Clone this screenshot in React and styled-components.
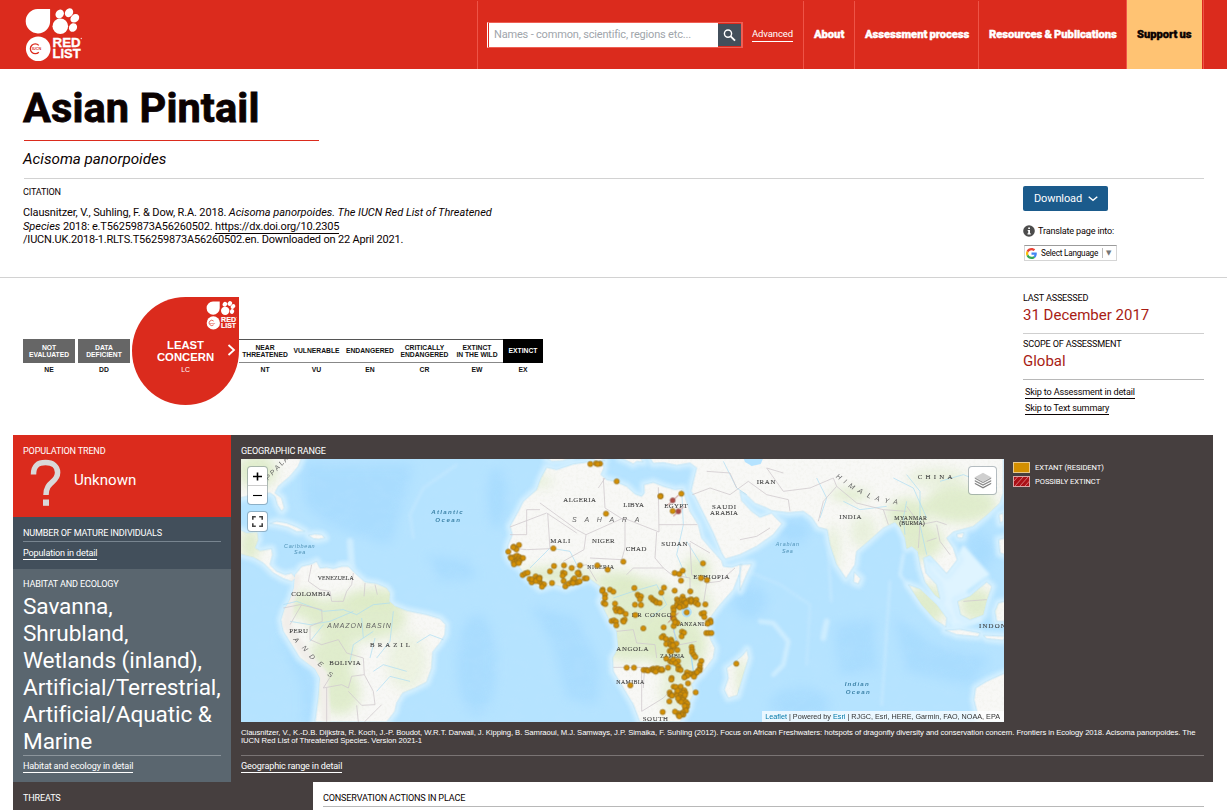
import React from "react";
import styled, { createGlobalStyle, css } from "styled-components";

const RED = "#db2b1d";
const DARK = "#463f3f";

const Global = createGlobalStyle`
  * { box-sizing: border-box; }
  html, body { margin: 0; padding: 0; background: #fff; overflow: hidden; }
  body { font-family: Roboto, "Liberation Sans", sans-serif; color: #0b0202; }
  h1, p { margin: 0; }
`;

const Page = styled.div`width: 1227px; height: 810px; overflow: hidden;`;

/* ---------- header ---------- */
const Header = styled.header`
  height: 69px; background: ${RED}; display: flex; padding: 0 24px 0 23px;
`;
const LogoBox = styled.div`flex: 1; padding-top: 8px;`;
const SearchCell = styled.div`
  width: 326px; margin-top: 1px; border-left: 1px solid #ee5447;
  display: flex; align-items: flex-start; padding: 21px 0 0 9px;
`;
const SearchBox = styled.div`
  width: 256px; height: 26px; border: 1px solid #ee5f54; border-left-color: #fff;
  border-right-width: 2px; padding-left: 1px; display: flex;
`;
const Field = styled.div`
  flex: 1; background: #fff; color: #a0a5ab; font-size: 11px; line-height: 23px; padding-left: 5px;
  white-space: nowrap; letter-spacing: -0.18px;
`;
const SearchButton = styled.div`
  width: 23px; height: 22px; margin-top: 1px; background: #424f5b; display: flex; align-items: center; justify-content: center;
`;
const Advanced = styled.span`
  margin: 6px 0 0 9px; color: #fff; font-size: 9.5px; line-height: 12px; height: 14px;
  border-bottom: 1px solid #fff; letter-spacing: -0.1px;
`;
const NavItem = styled.div`
  margin-top: 1px; width: ${(p) => p.$w}px; border-left: 1px solid #ee5447; color: #fff;
  font-size: 11.2px; font-weight: 900; line-height: 67px; padding-left: 10px; white-space: nowrap;
  letter-spacing: -0.03px; word-spacing: -0.6px; -webkit-text-stroke: 0.4px currentColor;
  ${(p) => p.$accent && css`
    margin-top: 0; padding-top: 1px; background: #ffc373; color: #0b0202;
    border-right: 1px solid ${RED};
    box-shadow: 1px 0 0 #ee5447;
  `}
`;

/* ---------- title ---------- */
const TitleSection = styled.section`
  height: 209px; padding: 0 23px 0 24px; border-bottom: 1px solid #d2d2d2;
`;
const Title = styled.h1`
  width: 295px; height: 72px; font-size: 41.5px; font-weight: 700; line-height: 77px; text-indent: -1px;
  border-bottom: 1px solid ${RED}; letter-spacing: 0.1px; white-space: nowrap; -webkit-text-stroke: 0.8px currentColor;
`;
const Latin = styled.p`
  height: 38px; font-size: 15.2px; font-style: italic; line-height: 37px; text-indent: -1px;
  border-bottom: 1px solid #d2d2d2;
`;
const Columns = styled.div`display: flex; justify-content: space-between;`;
const CitationCol = styled.div`padding-top: 7px;`;
const Side = styled.div`width: 181px;`;
const Label = styled.div`
  font-size: 9.1px; line-height: 12px; letter-spacing: -0.18px; white-space: nowrap; color: ${(p) => p.$c || "#0b0202"};
  margin-left: ${(p) => p.$ml || 0}px;
`;
const Citation = styled.p`
  margin: 8px 0 0 -1px; font-size: 11px; line-height: 13.5px; white-space: nowrap; letter-spacing: -0.18px;
`;
const CiteLink = styled.a`border-bottom: 1px solid #0b0202;`;
const CiteAuthors = styled.span`letter-spacing: -0.145px;`;
const CiteItalic = styled.i`letter-spacing: ${(p) => p.$ls || 0}px;`;
const Download = styled.div`
  width: 85px; height: 25px; margin-top: 7px; border-radius: 2px; background: #1b5b8c; color: #fff;
  font-size: 11px; display: flex; align-items: center; padding-left: 11px; gap: 6px; letter-spacing: -0.12px;
`;
const Translate = styled.div`
  display: flex; align-items: center; gap: 3px; margin-top: 13px; font-size: 9.1px; height: 13px; letter-spacing: -0.18px;
`;
const LangSelect = styled.div`
  margin: 8px 0 0 1px; width: 93px; height: 16px; border: 1px solid #d5d5d5; border-top-color: #9b9b9b;
  display: flex; align-items: center; padding-left: 1px; font-size: 8.2px; white-space: nowrap;
`;
const LangText = styled.span`margin-left: 4px; width: 61px; letter-spacing: -0.22px;`;
const Arrow = styled.span`
  border-left: 1px solid #bbb; height: 10px; line-height: 10px; padding-left: 3px; color: #767676; font-size: 7px;
  font-family: "DejaVu Sans", sans-serif;
`;

/* ---------- status ---------- */
const StatusSection = styled.section`
  height: 157px; padding: 0 23px; display: flex; justify-content: space-between;
`;
const Scale = styled.div`
  display: flex; align-items: flex-start; padding-top: 19px; font-family: "Liberation Sans", Arial, sans-serif;
`;
const Stage = styled.div`width: ${(p) => p.$w}px; margin: 42px ${(p) => p.$gap || 0}px 0 0; color: #111;`;
const StageBox = styled.div`
  height: 24px; display: flex; align-items: center; justify-content: center; text-align: center;
  font-size: 6.75px; font-weight: 700; line-height: 7.3px; white-space: pre;
  border-top: 1px solid #555; border-bottom: 1px solid #888;
  ${(p) => p.$tone && css`background: ${p.$tone}; color: #fff; border-color: ${p.$tone};`}
`;
const StageCode = styled.div`text-align: center; font-size: 6.8px; font-weight: 700; line-height: 8px; margin-top: 3px;`;
const Drop = styled.div`
  width: 107px; height: 108px; background: ${RED}; border-radius: 50% 0 50% 50%; color: #fff;
  position: relative; display: flex; flex-direction: column; align-items: center; padding-top: 42px;
`;
const DropName = styled.div`font-size: 11.3px; font-weight: 700; line-height: 12px; text-align: center; white-space: pre;`;
const DropCode = styled.div`font-size: 6.8px; line-height: 8px; margin-top: 3px;`;
const DropLogo = styled.div`position: absolute; right: 2px; top: 4px; line-height: 0;`;
const DropChevron = styled.div`position: absolute; right: 3px; top: 47px; line-height: 0;`;
const Facts = styled.div`width: 181px; padding-top: 14px;`;
const Fact = styled.div`height: ${(p) => p.$h}px; border-bottom: 1px solid ${(p) => p.$line || "#cfcfcf"};
  padding-top: ${(p) => p.$pt || 0}px;`;
const FactValue = styled.div`font-size: 15px; line-height: 20px; margin-top: 1px; color: #a81c14; white-space: nowrap;`;
const InlineLink = styled.a`
  display: table; font-size: 9.1px; line-height: 11px; height: 12px; white-space: nowrap;
  border-bottom: 1px solid currentColor; color: ${(p) => p.$c || "#0b0202"};
  margin: ${(p) => p.$m || "0"}; letter-spacing: -0.16px;
`;

/* ---------- panels ---------- */
const Panels = styled.section`height: 347px; margin: 0 14px 0 13px; display: flex; background: ${DARK};`;
const LeftCol = styled.div`width: 218px; flex: none; color: #fff;`;
const Panel = styled.div`height: ${(p) => p.$h}px; background: ${(p) => p.$bg}; padding: ${(p) => p.$pt}px 10px 0;`;
const Trend = styled.div`display: flex; align-items: flex-start; padding-left: 7px;`;
const TrendValue = styled.div`font-size: 15.1px; line-height: 20px; margin: 13px 0 0 13px;`;
const Rule = styled.div`height: 1px; background: ${(p) => p.$c}; margin-top: ${(p) => p.$mt || 0}px;`;
const Habitats = styled.div`font-size: 22.6px; line-height: 27px; white-space: pre; margin-top: 3px; letter-spacing: -0.08px;`;
const MapCol = styled.div`flex: 1; min-width: 0; padding: 10px 9px 0 10px; color: #fff;`;
const MapRow = styled.div`display: flex; margin-top: 2px;`;
const MapFrame = styled.div`position: relative; flex: none; width: 763px; height: 263px; overflow: hidden; background: #b4e3ff;`;
const Legend = styled.div`padding: 2px 0 0 9px; display: flex; flex-direction: column; gap: 2px;`;
const LegendItem = styled.div`
  display: flex; align-items: center; gap: 5px; height: 12px; font-size: 7.6px; letter-spacing: -0.05px; white-space: nowrap;
`;
const Control = styled.div`
  position: absolute; left: ${(p) => p.$x}px; top: ${(p) => p.$y}px; width: ${(p) => p.$w}px; height: ${(p) => p.$h}px;
  background: #fff; border-radius: 3px; box-shadow: 0 0 0 1px rgba(80,100,115,.4); color: #000;
  display: flex; flex-direction: column; align-items: center; justify-content: center;
`;
const Zoom = styled.span`
  height: 19px; width: 100%; display: flex; align-items: center; justify-content: center;
  & + & { border-top: 1px solid #ccc; }
`;
const Attribution = styled.div`
  position: absolute; right: 0; bottom: 0; height: 11px; padding: 0 4px 0 3px; background: rgba(255,255,255,.72);
  color: #333; font: 7.23px/11px "Liberation Sans", Arial, sans-serif; white-space: nowrap;
  a { color: #0078a8; }
`;
const MapNote = styled.p`
  margin-top: 7px; font: 7.7px/8px "Liberation Sans", Arial, sans-serif; white-space: nowrap; height: 16px;
  letter-spacing: -0.067px;
`;
const Bottom = styled.section`display: flex; margin: 0 14px 0 13px; height: 28px;`;
const Threats = styled.div`width: 300px; background: ${DARK}; padding: 10px 10px 0;`;
const Actions = styled.div`flex: 1; padding: 10px 9px 0 10px;`;

/* ---------- drawings ---------- */
const RedListLogo = ({ w, h }) => (
  <svg width={w} height={h} viewBox="0 0 59 54">
    <g fill="#fff">
      <path d="M14.5 1H27.1V13.5A12.2 12.2 0 1 1 14.5 1Z" />
      <circle cx="37.3" cy="18.3" r="7.8" />
      <ellipse cx="36.7" cy="6" rx="4" ry="4.7" transform="rotate(35 36.7 6)" />
      <ellipse cx="46" cy="4.7" rx="3.9" ry="4.7" transform="rotate(35 46 4.7)" />
      <ellipse cx="51.8" cy="10.3" rx="3.8" ry="4.8" transform="rotate(50 51.8 10.3)" />
      <ellipse cx="50" cy="19.5" rx="3.9" ry="4.5" transform="rotate(35 50 19.5)" />
      <circle cx="15.2" cy="40.8" r="12.3" />
      <g fontFamily="'Liberation Sans', Arial, sans-serif" fontWeight="700" fontSize="13.2" stroke="#fff" strokeWidth=".35">
        <text x="29.6" y="39.4" textLength="28" lengthAdjust="spacingAndGlyphs">RED</text>
        <text x="29.6" y="50.4" textLength="28" lengthAdjust="spacingAndGlyphs">LIST</text>
      </g>
      <circle cx="58.3" cy="30.5" r=".7" opacity=".8" />
    </g>
    <path d="M15.8 37.4A4.9 4.9 0 1 0 15.8 44.2" fill="none" stroke={RED} strokeWidth="1.3" />
    <text x="9" y="42.3" fontSize="4" fontWeight="700" fill={RED} fontFamily="'Liberation Sans', Arial, sans-serif" textLength="9.3" lengthAdjust="spacingAndGlyphs">IUCN</text>
  </svg>
);

const SearchIcon = () => (
  <svg width="13" height="13" viewBox="0 0 13 13" fill="none" stroke="#fff">
    <circle cx="5" cy="4.6" r="3.6" strokeWidth="1.4" />
    <path d="M7.7 7.4L12 11.6" strokeWidth="1.9" />
  </svg>
);

const GoogleG = () => (
  <svg width="11" height="11" viewBox="0 0 48 48">
    <path fill="#EA4335" d="M24 9.5c3.54 0 6.71 1.22 9.21 3.6l6.85-6.85C35.9 2.38 30.47 0 24 0 14.62 0 6.51 5.38 2.56 13.22l7.98 6.19C12.43 13.72 17.74 9.5 24 9.5z" />
    <path fill="#4285F4" d="M46.98 24.55c0-1.57-.15-3.09-.38-4.55H24v9.02h12.94c-.58 2.96-2.26 5.48-4.78 7.18l7.73 6c4.51-4.18 7.09-10.36 7.09-17.65z" />
    <path fill="#FBBC05" d="M10.53 28.59c-.48-1.45-.76-2.99-.76-4.59s.27-3.14.76-4.59l-7.98-6.19C.92 16.46 0 20.12 0 24c0 3.88.92 7.54 2.56 10.78l7.97-6.19z" />
    <path fill="#34A853" d="M24 48c6.48 0 11.93-2.13 15.89-5.81l-7.73-6c-2.15 1.45-4.92 2.3-8.16 2.3-6.26 0-11.57-4.22-13.47-9.91l-7.98 6.19C6.51 42.62 14.62 48 24 48z" />
  </svg>
);

const LAND = [
  "M-750 0H-565L-575 25L-600 55L-635 85L-645 105L-625 120L-617 150L-625 160L-638 140L-645 115L-660 105L-690 110L-730 115L-750 120Z",
  "M-750 215L-730 225L-698 222L-695 245L-705 270L-690 278L-655 272L-652 290L-660 320L-640 340L-615 350L-595 345L-585 360L-595 370L-620 362L-650 345L-680 315L-710 298L-750 288Z",
  "M-662 197L-640 190L-610 195L-580 207L-555 220L-580 221L-605 208L-640 200Z",
  "M-545 232L-525 228L-505 230L-495 240L-515 244L-530 242Z",
  "M-585 350L-565 325L-535 318L-520 310L-510 330L-490 328L-470 332L-445 325L-425 325L-405 345L-375 372L-340 377L-310 390L-300 405L-302 430L-285 445L-250 458L-190 470L-150 482L-133 500L-135 530L-150 555L-172 582L-175 630L-190 672L-225 690L-262 705L-280 735L-285 760L-310 792H-525L-515 720L-510 660L-525 632L-570 600L-595 560L-620 520L-627 485L-617 455L-600 425L-588 390Z",
  "M170 28L200 35L250 18L310 10L337 12L342 30L333 50L350 65L375 70L410 85L435 108L455 115L463 105L462 80L490 73L520 85L555 95L578 92L590 130L600 160L625 200L635 240L665 275L695 308L700 325L725 328L755 318L750 345L730 395L690 440L660 480L655 510L662 545L675 570L670 600L640 640L620 660L605 680L612 705L600 730L597 750L582 775L570 792H450L430 740L400 690L370 640L368 600L385 570L380 520L360 490L345 460L330 430L340 405L330 385L300 363L270 372L230 390L190 380L150 392L110 360L90 330L60 310L50 290L55 260L67 230L60 205L85 160L100 130L140 95L153 60Z",
  "M771 575L776 600L760 650L742 712L715 720L703 695L715 660L710 630L735 612L758 592Z",
  "M170 0H245L215 9L185 10ZM300 0H330L345 8L320 9ZM390 0H450L460 12L440 10L430 18L410 8ZM480 0H1540V105L1530 135L1490 172L1450 205L1390 222L1370 240L1390 270L1402 305L1370 347L1350 325L1320 292L1300 300L1308 345L1340 380L1350 422L1335 412L1305 372L1292 330L1283 280L1265 265L1250 272L1245 240L1230 210L1215 193L1180 210L1135 250L1100 280L1095 320L1068 362L1040 320L1020 260L1012 215L985 208L965 178L940 160L895 164L845 158L830 150L795 136L770 112L750 100L755 128L785 160L810 178L845 165L858 180L876 197L850 230L800 265L750 290L706 303L695 285L670 225L640 165L615 115L603 100L610 70L620 30L600 15L560 22L520 14L490 16Z",
  "M750 320L785 318L770 350L750 398Z",
  "M1093 342L1112 362L1105 378L1090 372Z",
  "M1255 380L1290 393L1340 440L1370 480L1368 507L1335 485L1295 440Z",
  "M1365 517L1410 514L1470 525L1465 536L1400 530ZM1480 532L1545 535L1540 547L1490 542Z",
  "M1403 430L1440 415L1490 372L1506 385L1490 430L1480 470L1440 485L1412 470Z",
  "M1515 460L1525 435L1545 430V490H1520ZM1527 170L1540 165V190L1530 195ZM1526 245L1545 240V290L1530 285Z",
  "M1400 228L1422 224L1418 240L1403 240Z",
  "M1545 645L1490 670L1457 690L1452 725L1462 765L1470 792H1545Z",
].join("");

const BORDERS = [
  "M170 165L60 207M150 135L260 215L288 230L400 180L507 222L505 88M340 60L345 150L400 185M173 165L180 272L110 275M173 167L260 225M288 230L282 275L220 310M405 185L405 270L395 305L300 300M507 200H622M500 222L495 300L520 330M410 350L430 330L520 330L545 350L600 360M600 250L660 285M600 255L605 350L650 375L690 370L735 330M650 375L640 440",
  "M370 628H450L500 630L560 615M455 630V760L520 720L550 690M463 640L460 690M380 520L430 515L440 555L495 560L500 600M560 480L550 520L570 560L620 550M600 420V360M220 330V380M270 320V370M60 230H110V155H150M110 275L60 270M240 330L290 320L320 370M345 60L325 90",
  "M-535 320L-545 370L-510 395L-480 400L-475 430L-440 430L-430 400L-415 380L-410 345M-375 375L-378 415M-345 380L-338 410M-620 450L-570 440L-505 455L-503 490L-540 505L-540 545L-505 560L-455 545L-430 585L-380 600L-377 650L-415 655L-425 690L-445 680L-500 690L-475 650M-377 650L-350 700L-345 740L-385 742L-425 700M-490 690V792M-377 792L-325 740M-400 742L-395 792M-600 500L-565 440",
  "M607 110L660 90L720 110L775 70L830 110M650 40L720 45L740 90M750 245L800 235L840 210M830 110L895 125L900 160M880 45L830 30L880 100L960 90L1030 60L1040 85L1000 130L985 190M1040 85L1100 135L1180 155L1250 160M1180 155L1195 200M1250 145L1290 200L1340 190L1370 200M1290 200L1285 270M1340 200L1350 250L1380 290M1310 250L1340 240M1420 430L1490 425",
];

const RIVERS = [
  "M-620 440L-580 430L-500 460L-440 455L-400 470L-350 440L-300 435M-600 490L-540 500L-480 490L-410 460M-540 550L-500 500M-380 540L-385 480M-290 460L-300 550L-340 600M-220 555L-180 530L-140 545M-350 640L-320 620L-250 640M-340 700L-300 655L-240 670M-420 610L-410 560L-350 520M-360 600L-345 540",
  "M575 95L580 200L560 290L590 360M120 330L180 270L240 280L270 340M370 420L430 400L500 380L530 440L480 480M560 620L500 640M590 250L640 330",
  "M990 180L1010 120L980 60M1060 130L1110 155L1190 145M1210 60L1270 90L1310 180M1250 50L1290 100L1290 200L1310 290M1350 70L1420 50L1520 90M1250 130L1240 180L1245 230M700 10L740 90L770 110",
];

const GREENS = [
  [-400, 480, 150, 70], [-470, 590, 70, 60], [-340, 420, 90, 30], [-450, 700, 60, 70], [-250, 610, 60, 90, 0.4],
  [-560, 440, 50, 40], [-700, 40, 60, 50], [-720, 260, 30, 50],
  [450, 440, 110, 80], [430, 560, 100, 50], [560, 560, 90, 90], [200, 350, 110, 25], [620, 340, 40, 45],
  [610, 440, 60, 50, 0.6], [380, 370, 70, 30], [560, 700, 50, 70, 0.6], [755, 660, 14, 60],
  [1250, 170, 60, 50], [1410, 140, 110, 55], [1290, 250, 70, 55], [1460, 440, 50, 50], [1310, 440, 60, 60],
  [1120, 220, 40, 50, 0.5], [1030, 270, 18, 70, 0.6], [1080, 110, 60, 18], [1340, 60, 90, 30, 0.5], [150, 70, 40, 20, 0.5],
];

const DOTS = `301,18 318,16 330,17 323,18 380,70 348,167 512,114 511,115 574,107 548,159 87,261 71,266 79,274 70,268 55,281 62,298 69,300 75,296 81,293 88,297 94,301 99,300 84,305 77,310 71,313 80,314 88,310 72,319 64,301 86,315 190,271 98,351 106,346 113,344 119,363 125,373 126,364 137,355 143,362 149,359 149,371 156,378 162,379 156,386 138,369 148,362 186,375 180,340 192,324 222,322 245,330 270,322 219,344 224,346 218,353 221,369 226,385 236,377 245,373 249,366 254,371 259,373 264,372 269,370 265,344 267,350 263,345 253,361 284,361 290,361 249,375 322,322 353,335 400,311 338,395 337,399 345,410 345,420 341,435 346,438 360,395 370,401 375,437 376,452 379,459 386,453 391,456 396,460 407,468 390,461 365,489 372,487 378,491 379,502 399,488 404,485 401,491 433,390 443,410 446,414 453,415 450,424 435,440 453,441 436,471 460,511 483,419 488,425 493,428 498,431 500,434 509,435 514,404 522,389 521,508 554,398 601,400 573,368 554,345 568,348 578,338 639,316 633,360 651,366 561,424 564,430 562,437 560,443 568,446 572,435 578,416 576,424 583,426 582,437 586,442 592,430 598,426 604,424 603,432 605,428 615,428 619,425 618,435 624,439 574,441 579,445 569,448 588,435 550,449 551,457 550,468 552,483 646,439 590,463 635,467 642,465 643,477 661,487 654,493 662,493 653,497 649,525 656,525 664,525 557,491 562,495 551,504 555,493 576,521 582,524 575,535 520,534 515,538 528,543 529,558 543,545 545,551 541,559 544,563 552,567 559,557 549,562 539,579 544,580 562,576 529,602 541,610 546,612 550,605 564,609 557,616 534,629 565,625 569,633 565,634 572,636 605,567 606,575 606,582 611,590 616,597 634,609 630,621 630,631 629,637 625,637 617,645 613,650 621,643 608,648 603,648 598,646 591,643 589,651 585,656 592,653 612,656 583,658 545,660 544,665 594,676 617,703 410,629 432,629 461,636 469,636 474,638 485,634 490,632 491,637 494,635 499,637 500,631 505,632 511,636 517,636 497,641 515,634 421,682 551,686 559,689 572,686 557,687 539,703 540,709 545,712 546,713 560,706 562,713 563,698 578,700 583,697 586,704 580,705 573,711 571,718 577,721 568,728 581,719 585,711 578,727 574,732 588,732 590,740 592,737 591,746 586,752 584,744 588,758 579,763 580,770 575,767 573,770 565,766 566,772 568,775 555,761 538,730 518,762 564,721 739,617`
  .split(" ").map((p) => p.split(",").map(Number));
const EXTINCT = [[548, 127], [565, 160], [549, 479]];

const COUNTRIES = [
  [220, 133, 98, "ALGERIA"], [400, 146, 62, "LIBYA"], [523, 151, 70, "EGYPT"], [666, 153, 72, "SAUDI"], [660, 172, 84, "ARABIA"],
  [181, 256, 60, "MALI"], [306, 256, 68, "NIGER"], [407, 279, 62, "CHAD"], [514, 264, 78, "SUDAN"], [292, 334, 80, "NIGERIA"],
  [610, 364, 108, "ETHIOPIA"], [425, 476, 120, "DR CONGO"], [558, 504, 98, "TANZANIA"], [379, 579, 96, "ANGOLA"],
  [511, 599, 72, "ZAMBIA"], [379, 679, 84, "NAMIBIA"], [458, 790, 76, "SOUTH"],
  [-517, 365, 108, "VENEZUELA"], [-596, 414, 118, "COLOMBIA"], [-602, 524, 56, "PERU"], [-360, 568, 120, "BRAZIL"], [-482, 620, 94, "BOLIVIA"],
  [800, 77, 56, "IRAN"], [1048, 182, 66, "INDIA"], [1283, 63, 104, "CHINA"], [1213, 185, 98, "MYANMAR"], [1228, 201, 76, "(BURMA)"], [1467, 510, 80, "INDON"],
];
const SEAS = [
  [-176, 167, 94, "Atlantic", 18.5, 700], [-164, 193, 74, "Ocean", 18.5, 700], [1064, 683, 72, "Indian", 18.5, 700], [1067, 708, 72, "Ocean", 18.5, 700],
  [-618, 270, 92, "Caribbean", 16.5, 400], [-588, 288, 34, "Sea", 16.5, 400], [857, 263, 70, "Arabian", 16, 400], [876, 284, 32, "Sea", 16, 400],
];
const RANGES = [
  [-592, 547, "A", 50], [-566, 572, "N", 50], [-544, 597, "D", 48], [-519, 619, "E", 38], [-490, 650, "S", 30],
  [1036, 57, "H", 35], [1055, 71, "I", 35], [1075, 86, "M", 33], [1101, 100, "A", 30], [1127, 114, "L", 25], [1152, 123, "A", 20], [1180, 129, "Y", 12], [1207, 132, "A", 8],
  [-675, 58, "P", -42], [-662, 44, "P", -44], [-648, 30, "A", -48], [-635, 16, "L", -52], [-624, 4, "A", -56],
];

const RangeMap = () => (
  <svg width="763" height="263" viewBox="241 459 763 263" style={{ display: "block" }}>
    <defs>
      <filter id="soft" x="-50%" y="-50%" width="200%" height="200%"><feGaussianBlur stdDeviation="16" /></filter>
      <filter id="shore"><feGaussianBlur stdDeviation="5" /></filter>
      <filter id="relief" x="0" y="0" width="100%" height="100%">
        <feTurbulence type="fractalNoise" baseFrequency=".02 .03" numOctaves="4" seed="4" />
        <feColorMatrix values="0 0 0 0 .52 0 0 0 0 .78 0 0 0 0 1 1.6 0 0 0 -.62" />
      </filter>
      <filter id="ground" x="0" y="0" width="100%" height="100%">
        <feTurbulence type="fractalNoise" baseFrequency=".12" numOctaves="3" seed="8" />
        <feColorMatrix values="0 0 0 0 .72 0 0 0 0 .74 0 0 0 0 .62 1.4 0 0 0 -.62" />
      </filter>
      <clipPath id="land"><path d={LAND} /></clipPath>
    </defs>
    <g transform="translate(490 458) scale(.33333)">
      <rect x="-750" y="0" width="2295" height="795" fill="#b5e3ff" />
      <g fill="#a5dafe" filter="url(#soft)" opacity=".75">
        <path d="M-560 20H-230L-260 130L-300 260L-400 230L-500 190L-560 130Z" />
        <path d="M-190 290L-60 310L-40 360L-150 370Z" />
        <ellipse cx="-40" cy="620" rx="60" ry="150" />
        <path d="M120 440L260 480L330 620L320 740L230 720L190 560Z" />
        <ellipse cx="20" cy="120" rx="30" ry="90" />
        <ellipse cx="780" cy="430" rx="50" ry="50" />
        <path d="M1030 500L1150 480L1160 640L1050 650Z" />
        <path d="M1210 470L1330 560L1500 600L1440 680L1250 640Z" />
        <ellipse cx="930" cy="740" rx="90" ry="50" />
        <ellipse cx="1470" cy="280" rx="40" ry="60" />
        <ellipse cx="910" cy="220" rx="50" ry="35" />
        <path d="M-640 530L-560 620L-530 680L-530 792L-560 792L-560 680Z" />
      </g>
      <rect x="-750" y="0" width="2295" height="795" filter="url(#relief)" opacity=".2" />
      <g fill="none" stroke="#dff4ff" strokeLinecap="round" filter="url(#shore)" opacity=".6">
        <path d="M-230 240L-240 170L-200 90L-100 20" strokeWidth="8" opacity=".5" />
        <path d="M1015 280L1024 430M1200 370L1185 600L1175 740" strokeWidth="8" opacity=".6" />
        <path d="M810 490L850 495L895 550L880 620L850 650" strokeWidth="14" />
        <path d="M1010 490L1000 540" strokeWidth="18" />
        <path d="M750 330L870 380L960 440L950 620" strokeWidth="7" opacity=".5" />
        <path d="M-420 250L-415 320L-450 320" strokeWidth="20" />
        <path d="M1240 290L1230 350L1280 420L1400 530" strokeWidth="10" />
      </g>
      <path d="M1290 300L1330 420L1390 520L1480 490L1430 400L1500 350L1420 260L1380 330Z" fill="#dff4ff" filter="url(#shore)" />
      <path d={LAND} fill="none" stroke="#cdedff" strokeWidth="34" strokeLinejoin="round" filter="url(#shore)" opacity=".5" />
      <path d={LAND} fill="none" stroke="#dcf3ff" strokeWidth="16" strokeLinejoin="round" filter="url(#shore)" opacity=".75" />
      <path d={LAND} fill="#f8f8f6" stroke="#b3def4" strokeWidth="2" />
      <g clipPath="url(#land)">
        <g fill="#dcebc6" filter="url(#soft)">
          {GREENS.map(([x, y, rx, ry, o], i) => <ellipse key={i} cx={x} cy={y} rx={rx} ry={ry} opacity={o || 0.85} />)}
        </g>
        <rect x="-750" y="0" width="2295" height="795" filter="url(#ground)" opacity=".25" />
        <path d="M-580 350L-600 430L-610 500L-560 580L-500 650L-490 790" fill="none" stroke="#f1eeea" strokeWidth="26" filter="url(#shore)" />
      </g>
      <g fill="none" stroke="#a9dcf5" strokeWidth="2" strokeLinejoin="round">
        {RIVERS.map((d, i) => <path key={i} d={d} />)}
        <ellipse cx="590" cy="462" rx="14" ry="15" fill="#b5e3ff" />
        <path d="M548 500L560 555M603 590L610 640" strokeWidth="4" />
        <path d="M760 0H820L812 18L785 24L765 12Z" fill="#b5e3ff" stroke="none" />
      </g>
      <g fill="none" stroke="#d0cace" strokeWidth="2.4" strokeLinejoin="round">
        {BORDERS.map((d, i) => <path key={i} d={d} />)}
      </g>
      <g fontFamily="'Liberation Serif', serif" fill="#3f3f3f" stroke="#3f3f3f" strokeWidth=".3">
        {COUNTRIES.map(([x, y, w, t]) => <text key={t} x={x} y={y} textLength={w} fontSize={/MYAN|BURMA|NIGERIA|ZAMB|TANZ|NAMI|VENEZ/.test(t) ? 17.5 : 20.5}>{t}</text>)}
      </g>
      <g fontFamily="'Liberation Sans', sans-serif" fontStyle="italic" fill="#3d83a8">
        {SEAS.map(([x, y, w, t, s, fw], i) => <text key={i} x={x} y={y} textLength={w} fontSize={s} fontWeight={fw} opacity={fw === 400 ? 0.85 : 1}>{t}</text>)}
      </g>
      <g fontFamily="'Liberation Sans', sans-serif" fontStyle="italic" fill="#666" fontSize="21">
        <text x="-488" y="510" textLength="190">AMAZON BASIN</text>
        <text x="246" y="191" textLength="202">SAHARA</text>
        {RANGES.map(([x, y, t, r], i) => (
          <text key={i} x={x + 10} y={y + 6} textAnchor="middle" transform={`rotate(${r} ${x + 10} ${y})`}>{t}</text>
        ))}
      </g>
      <g stroke="#a8403c" strokeWidth="2">
        {EXTINCT.map(([x, y], i) => (
          <g key={i}><path d={`M${x - 15} ${y + 15}L${x + 17} ${y - 15}`} /><circle cx={x} cy={y} r="7.5" fill="#ae4a44" stroke="#8d5050" /></g>
        ))}
      </g>
      <g fill="#d38f05" stroke="#86671e" strokeWidth="1.8">
        {DOTS.map(([x, y], i) => <circle key={i} cx={x} cy={y} r="7.8" />)}
      </g>
    </g>
  </svg>
);

const STAGES = [
  [52, "NEAR\nTHREATENED", "NT"], [51, "VULNERABLE", "VU"], [56, "ENDANGERED", "EN"],
  [53, "CRITICALLY\nENDANGERED", "CR"], [52, "EXTINCT\nIN THE WILD", "EW"], [40, "EXTINCT", "EX", "#000"],
];

export default function App() {
  return (
    <Page>
      <Global />
      <Header>
        <LogoBox><RedListLogo w={59} h={54} /></LogoBox>
        <SearchCell>
          <SearchBox>
            <Field>Names - common, scientific, regions etc...</Field>
            <SearchButton><SearchIcon /></SearchButton>
          </SearchBox>
          <Advanced>Advanced</Advanced>
        </SearchCell>
        <NavItem $w={51}>About</NavItem>
        <NavItem $w={124}>Assessment process</NavItem>
        <NavItem $w={148}>Resources &amp; Publications</NavItem>
        <NavItem $w={77} $accent>Support us</NavItem>
      </Header>

      <TitleSection>
        <Title>Asian Pintail</Title>
        <Latin>Acisoma panorpoides</Latin>
        <Columns>
          <CitationCol>
            <Label $ml={-1}>CITATION</Label>
            <Citation>
              <CiteAuthors>Clausnitzer, V., Suhling, F. &amp; Dow, R.A. 2018. </CiteAuthors>
              <CiteItalic $ls={-0.02}>Acisoma panorpoides. The IUCN Red List of Threatened</CiteItalic><br />
              <CiteItalic>Species</CiteItalic> 2018: e.T56259873A56260502. <CiteLink>https://dx.doi.org/10.2305</CiteLink><br />
              /IUCN.UK.2018-1.RLTS.T56259873A56260502.en. Downloaded on 22 April 2021.
            </Citation>
          </CitationCol>
          <Side>
            <Download>
              Download
              <svg width="10" height="6" viewBox="0 0 10 6" fill="none" stroke="#fff" strokeWidth="1.4"><path d="M.7 .8L5 4.4L9.3 .8" /></svg>
            </Download>
            <Translate>
              <svg width="12" height="12" viewBox="0 0 12 12"><circle cx="6" cy="6" r="5.8" fill="#4c4c4c" /><path d="M5.2 2.4H7V4H5.2ZM4.7 5H7V8.3H7.7V9.4H4.5V8.3H5.2V6H4.7Z" fill="#fff" /></svg>
              Translate page into:
            </Translate>
            <LangSelect><GoogleG /><LangText>Select Language</LangText><Arrow>▼</Arrow></LangSelect>
          </Side>
        </Columns>
      </TitleSection>

      <StatusSection>
        <Scale>
          <Stage $w={52} $gap={3}><StageBox $tone="#666">{"NOT\nEVALUATED"}</StageBox><StageCode>NE</StageCode></Stage>
          <Stage $w={52} $gap={2}><StageBox $tone="#666">{"DATA\nDEFICIENT"}</StageBox><StageCode>DD</StageCode></Stage>
          <Drop>
            <DropLogo><RedListLogo w={32} h={29} /></DropLogo>
            <DropName>{"LEAST\nCONCERN"}</DropName>
            <DropCode>LC</DropCode>
            <DropChevron><svg width="9" height="12" viewBox="0 0 9 12" fill="none" stroke="#fff" strokeWidth="1.8"><path d="M1.5 1L7 6L1.5 11" /></svg></DropChevron>
          </Drop>
          {STAGES.map(([w, name, code, tone]) => (
            <Stage key={code} $w={w}><StageBox $tone={tone}>{name}</StageBox><StageCode>{code}</StageCode></Stage>
          ))}
        </Scale>
        <Facts>
          <Fact $h={42}><Label>LAST ASSESSED</Label><FactValue>31 December 2017</FactValue></Fact>
          <Fact $h={46} $line="#b8b8b8" $pt={4}><Label>SCOPE OF ASSESSMENT</Label><FactValue>Global</FactValue></Fact>
          <InlineLink $m="7px 0 4px 2px">Skip to Assessment in detail</InlineLink>
          <InlineLink $m="0 0 0 2px">Skip to Text summary</InlineLink>
        </Facts>
      </StatusSection>

      <Panels>
        <LeftCol>
          <Panel $h={82} $bg={RED} $pt={10}>
            <Label $c="#fff">POPULATION TREND</Label>
            <Trend>
              <svg width="31" height="50" viewBox="0 0 31 50" fill="none" stroke="#d9d9d9" strokeWidth="5.5">
                <path d="M3.5 17.5C3.5 8.5 8 5.6 15.5 5.6C23 5.6 27.6 9.5 27.6 15.5C27.6 26 16 24 16 38" />
                <path d="M16 42.5V48.8" strokeWidth="6" />
              </svg>
              <TrendValue>Unknown</TrendValue>
            </Trend>
          </Panel>
          <Panel $h={52} $bg="#424f5b" $pt={10}>
            <Label $c="#fff">NUMBER OF MATURE INDIVIDUALS</Label>
            <Rule $c="#788590" $mt={2} />
            <InlineLink $c="#fff" $m="6px 0 0">Population in detail</InlineLink>
          </Panel>
          <Panel $h={213} $bg="#5a666f" $pt={9}>
            <Label $c="#fff">HABITAT AND ECOLOGY</Label>
            <Habitats>{"Savanna,\nShrubland,\nWetlands (inland),\nArtificial/Terrestrial,\nArtificial/Aquatic &\nMarine"}</Habitats>
            <Rule $c="#8c959c" />
            <InlineLink $c="#fff" $m="5px 0 0">Habitat and ecology in detail</InlineLink>
          </Panel>
        </LeftCol>
        <MapCol>
          <Label $c="#fff">GEOGRAPHIC RANGE</Label>
          <MapRow>
            <MapFrame>
              <RangeMap />
              <Control $x={7} $y={8} $w={19} $h={37}>
                <Zoom><svg width="9" height="9" viewBox="0 0 9 9" stroke="#000" strokeWidth="1.6"><path d="M0 4.5H9M4.5 .5V8.5" /></svg></Zoom>
                <Zoom><svg width="9" height="9" viewBox="0 0 9 9" stroke="#000" strokeWidth="1.1"><path d="M0 4.5H9" /></svg></Zoom>
              </Control>
              <Control $x={7} $y={53} $w={19} $h={19}>
                <svg width="11" height="11" viewBox="0 0 11 11" fill="none" stroke="#444" strokeWidth="1.6"><path d="M.8 3.8V.8H3.8M7.2 .8H10.2V3.8M10.2 7.2V10.2H7.2M3.8 10.2H.8V7.2" /></svg>
              </Control>
              <Control $x={728} $y={8} $w={27} $h={27}>
                <svg width="18" height="17" viewBox="0 0 18 17">
                  <path d="M.8 10.8L9 15L17.2 10.8V12L9 16.4L.8 12Z" fill="#7f7f7f" />
                  <path d="M.8 8L9 12.2L17.2 8V9.4L9 13.8L.8 9.4Z" fill="#8e8e8e" />
                  <path d="M.8 5.2L9 9.8L17.2 5.2V6.8L9 11.2L.8 6.8Z" fill="#999" />
                  <path d="M9 .8L17.2 5.2L9 9.8L.8 5.2Z" fill="#cfcfcf" />
                </svg>
              </Control>
              <Attribution><a>Leaflet</a> | Powered by <a>Esri</a> | RJGC, Esri, HERE, Garmin, FAO, NOAA, EPA</Attribution>
            </MapFrame>
            <Legend>
              <LegendItem>
                <svg width="17" height="11"><rect x=".5" y=".5" width="16" height="10" fill="#d38f00" stroke="#e9c98a" /></svg>EXTANT (RESIDENT)
              </LegendItem>
              <LegendItem>
                <svg width="17" height="11"><rect x=".5" y=".5" width="16" height="10" fill="#ab0f16" stroke="#d9a5a5" /><path d="M2 10L10 1M7 10L15 1M12 10L17 4.5M1 5L4.5 1" stroke="#e08f8f" strokeWidth=".8" /></svg>POSSIBLY EXTINCT
              </LegendItem>
            </Legend>
          </MapRow>
          <MapNote>
            Clausnitzer, V., K.-D.B. Dijkstra, R. Koch, J.-P. Boudot, W.R.T. Darwall, J. Kipping, B. Samraoui, M.J. Samways, J.P. Simaika, F. Suhling (2012). Focus on African Freshwaters: hotspots of dragonfly diversity and conservation concern. Frontiers in Ecology 2018. Acisoma panorpoides. The<br />
            IUCN Red List of Threatened Species. Version 2021-1
          </MapNote>
          <Rule $c="#7a7474" $mt={10} />
          <InlineLink $c="#fff" $m="5px 0 0">Geographic range in detail</InlineLink>
        </MapCol>
      </Panels>

      <Bottom>
        <Threats><Label $c="#fff">THREATS</Label></Threats>
        <Actions><Label>CONSERVATION ACTIONS IN PLACE</Label><Rule $c="#b8b8b8" $mt={2} /></Actions>
      </Bottom>
    </Page>
  );
}
